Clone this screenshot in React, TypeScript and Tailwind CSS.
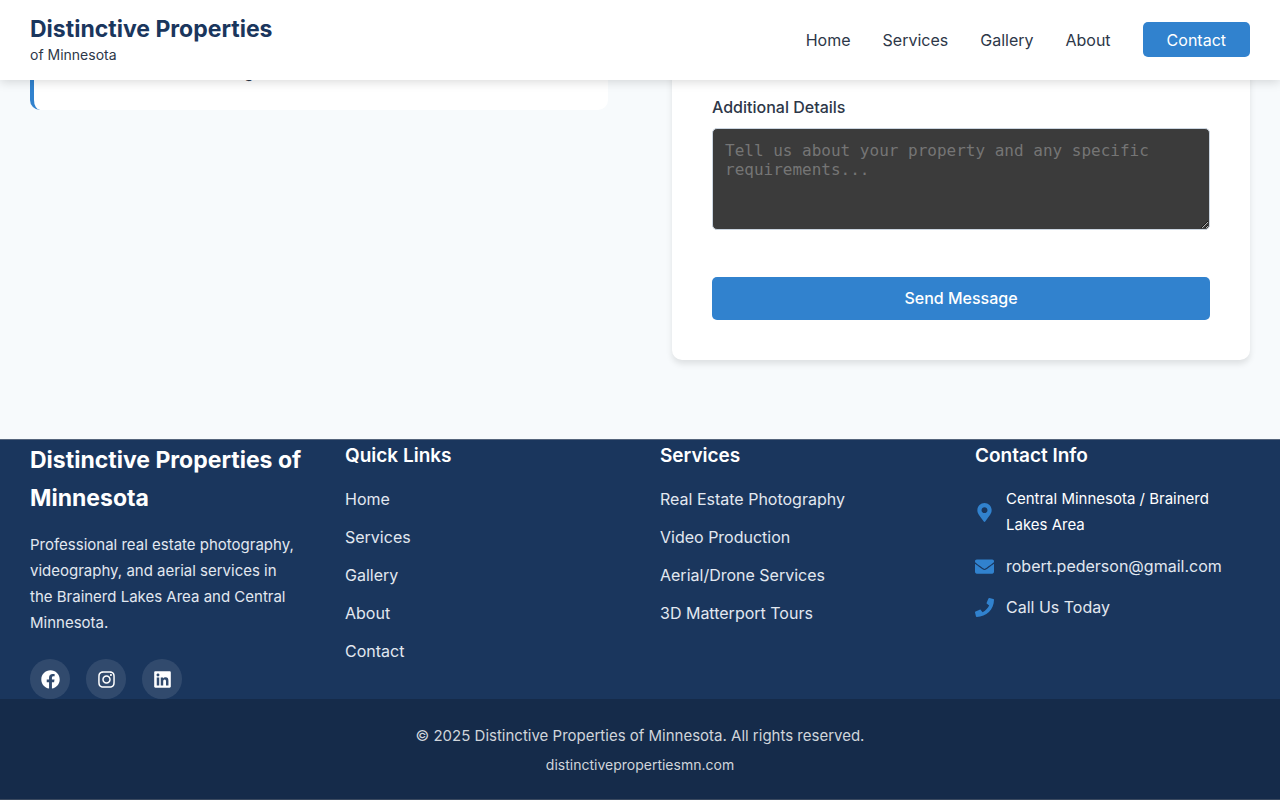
import type { ReactNode } from "react";
import {
  FaEnvelope,
  FaFacebook,
  FaInstagram,
  FaLinkedin,
  FaMapMarkerAlt,
  FaPhone,
} from "react-icons/fa";

const navItems = ["Home", "Services", "Gallery", "About"];
const quickLinks = ["Home", "Services", "Gallery", "About", "Contact"];
const services = [
  "Real Estate Photography",
  "Video Production",
  "Aerial/Drone Services",
  "3D Matterport Tours",
];
const socials = [
  { label: "Facebook", Icon: FaFacebook },
  { label: "Instagram", Icon: FaInstagram },
  { label: "LinkedIn", Icon: FaLinkedin },
];

function Header() {
  return (
    <header className="sticky top-0 z-10 flex h-20 items-center justify-between bg-white px-[30px] shadow-[0_2px_10px_rgba(0,0,0,0.15)]">
      <a href="#home" className="flex flex-col pb-0.5">
        <span className="text-[23px] leading-8 font-bold text-[#1a365d]">Distinctive Properties</span>
        <span className="text-sm leading-5">of Minnesota</span>
      </a>
      <nav className="flex items-center gap-8 pb-px text-base">
        {navItems.map((item) => (
          <a key={item} href={`#${item.toLowerCase()}`}>
            {item}
          </a>
        ))}
        <a href="#contact" className="rounded-[5px] bg-[#3182ce] px-6 pt-[7px] pb-[5px] leading-[23px] text-white">
          Contact
        </a>
      </nav>
    </header>
  );
}

function ContactSection() {
  return (
    <main className="-mt-6 grid grid-cols-2 items-start gap-16 px-[30px] pb-[79px]">
      <aside className="rounded-[10px] border-l-4 border-[#3182ce] bg-white px-8 pt-1.5 pb-[26px]">
        <p className="leading-[22px]">Online or email scheduling</p>
      </aside>
      <form
        className="flex flex-col rounded-b-[10px] bg-white px-10 pt-[38px] pb-10 shadow-[0_4px_6px_rgba(0,0,0,0.1)]"
        onSubmit={(event) => event.preventDefault()}
      >
        <label htmlFor="details" className="mb-2 text-base leading-[26px] font-medium">
          Additional Details
        </label>
        <textarea
          id="details"
          rows={4}
          placeholder="Tell us about your property and any specific requirements..."
          className="h-[102px] resize-y rounded-[5px] border border-[#cbd5e0] bg-[#3b3b3b] p-3 font-['DejaVu_Sans_Mono',monospace] text-base leading-[19px] text-white scheme-dark placeholder:text-[#757575]"
        />
        <button type="submit" className="mt-[47px] rounded-[5px] bg-[#3182ce] py-3 text-base leading-[19px] font-medium text-white">
          Send Message
        </button>
      </form>
    </main>
  );
}

function FooterColumn({ title, children }: { title: string; children: ReactNode }) {
  return (
    <section>
      <h4 className="mb-3.5 text-[19px] leading-8 font-semibold text-white">{title}</h4>
      {children}
    </section>
  );
}

function LinkList({ items }: { items: string[] }) {
  return (
    <ul className="flex flex-col gap-3 text-base leading-[26px]">
      {items.map((item) => (
        <li key={item}>
          <a href="#">{item}</a>
        </li>
      ))}
    </ul>
  );
}

function Footer() {
  return (
    <footer className="border-t border-b border-t-[#56657c] border-b-[#3a495f] bg-[#1a365d] text-[#e2e8f0]">
      <div className="grid grid-cols-4 gap-10 px-[30px]">
        <section>
          <h3 className="mb-[15px] pt-px text-[23px] leading-[38px] font-bold text-white">
            Distinctive Properties of Minnesota
          </h3>
          <p className="max-w-[270px]">
            Professional real estate photography, videography, and aerial services in the Brainerd
            Lakes Area and Central Minnesota.
          </p>
          <div className="mt-[23px] flex gap-4">
            {socials.map(({ label, Icon }) => (
              <a
                key={label}
                href="#"
                aria-label={label}
                className="flex size-10 items-center justify-center rounded-full bg-white/10 text-white"
              >
                <Icon size={19} />
              </a>
            ))}
          </div>
        </section>
        <FooterColumn title="Quick Links">
          <LinkList items={quickLinks} />
        </FooterColumn>
        <FooterColumn title="Services">
          <LinkList items={services} />
        </FooterColumn>
        <FooterColumn title="Contact Info">
          <address className="flex flex-col gap-[15px] not-italic">
            <p className="flex items-center gap-3 text-white">
              <FaMapMarkerAlt size={19} className="shrink-0 text-[#3182ce]" />
              Central Minnesota / Brainerd Lakes Area
            </p>
            <p className="flex items-center gap-3 text-base leading-[26px]">
              <FaEnvelope size={19} className="shrink-0 text-[#3182ce]" />
              <a href="mailto:robert.pederson@gmail.com">robert.pederson@gmail.com</a>
            </p>
            <p className="flex items-center gap-3 text-base leading-[26px]">
              <FaPhone size={19} className="shrink-0 text-[#3182ce]" />
              <a href="#call">Call Us Today</a>
            </p>
          </address>
        </FooterColumn>
      </div>
      <div className="flex flex-col items-center gap-1 bg-[#152b4a] pt-6 pb-[22px] text-[#d0d5db]">
        <p>© 2025 Distinctive Properties of Minnesota. All rights reserved.</p>
        <a href="#home" className="text-sm leading-6">
          distinctivepropertiesmn.com
        </a>
      </div>
    </footer>
  );
}

export default function App() {
  return (
    <div className="bg-[#f7fafc] font-[Inter,sans-serif] text-[15px] leading-[26px] text-[#2d3748]">
      <Header />
      <ContactSection />
      <Footer />
    </div>
  );
}
